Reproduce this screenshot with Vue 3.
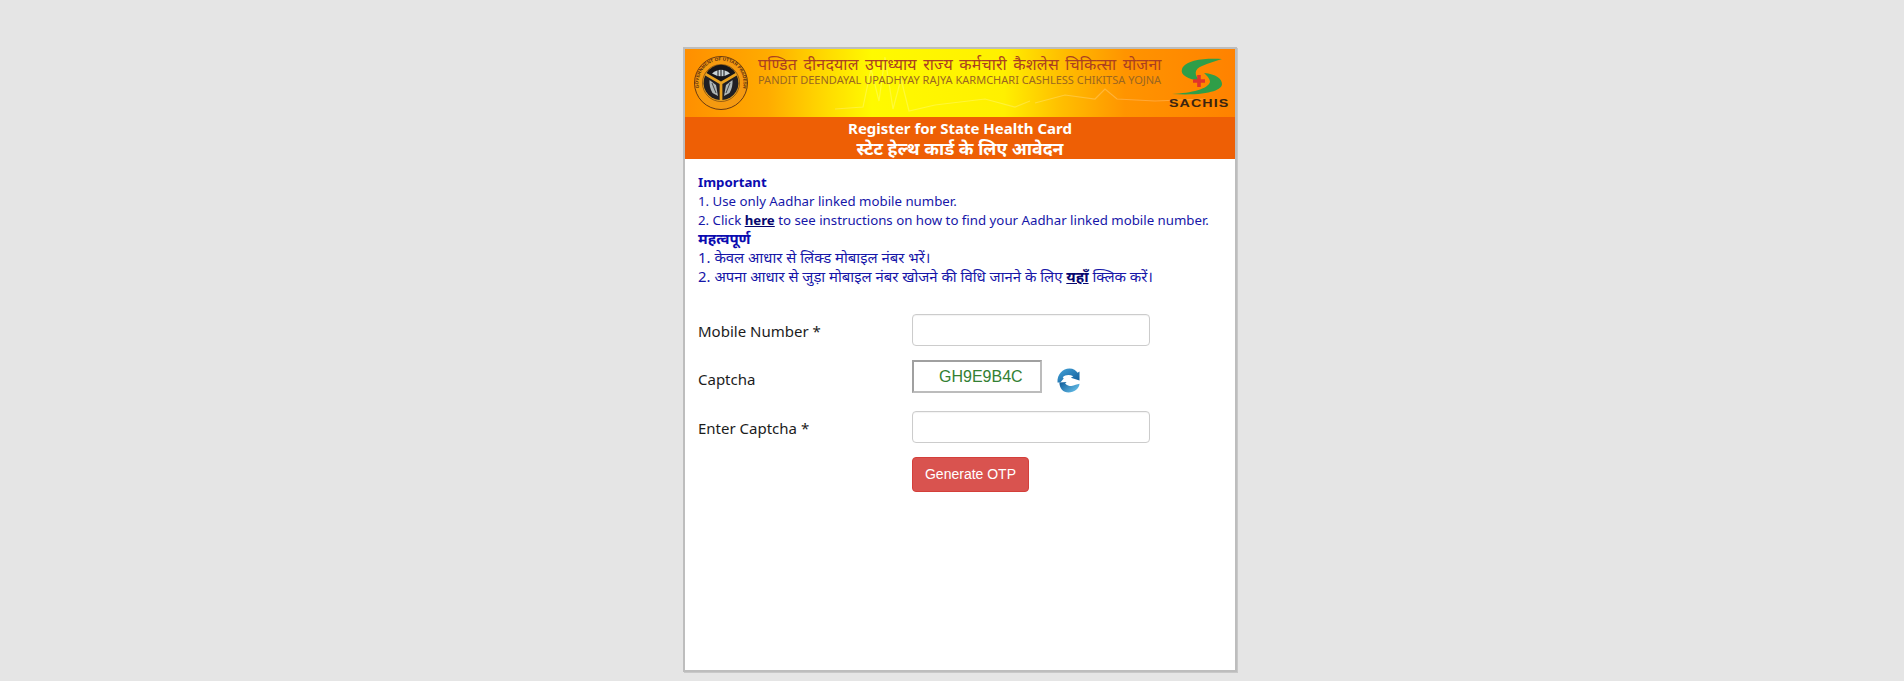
<script setup>
const notes = [
  { kind: 'head', text: 'Important' },
  { kind: 'line', text: '1. Use only Aadhar linked mobile number.' },
  { kind: 'link', before: '2. Click ', link: 'here', after: ' to see instructions on how to find your Aadhar linked mobile number.' },
  { kind: 'head', hi: true, text: 'महत्वपूर्ण' },
  { kind: 'line', hi: true, text: '1. केवल आधार से लिंक्ड मोबाइल नंबर भरें।' },
  { kind: 'link', hi: true, before: '2. अपना आधार से जुड़ा मोबाइल नंबर खोजने की विधि जानने के लिए ', link: 'यहाँ', after: ' क्लिक करें।' }
]
</script>

<template>
  <main class="page">
    <section class="card">
      <header class="banner">
        <svg class="ecg" viewBox="0 0 550 68" preserveAspectRatio="none" aria-hidden="true">
          <path d="M150 60 L178 58 L186 20 L194 52 L200 8 L208 60 L216 30 L224 62 L250 56 L300 50 L330 58 L345 52" />
          <path d="M350 54 L380 46 L410 50 L420 40 L432 50 L470 52 L520 50" />
        </svg>
        <svg class="emblem" viewBox="0 0 56 56" aria-hidden="true">
          <defs>
            <path id="ringText" d="M28 28 m-21.8 6 a22.6 22.6 0 1 1 43.6 0" />
          </defs>
          <circle cx="28" cy="28" r="26.5" fill="#f59a10" stroke="#6b3a10" stroke-width="1" />
          <text class="ring-text"><textPath href="#ringText" startOffset="1">GOVERNMENT OF UTTAR PRADESH</textPath></text>
          <circle cx="28" cy="28" r="18.500" fill="#e9a21f" stroke="#5a3410" stroke-width="0.6" />
          <path d="M28 26.500 L13.500 18 A17 17 0 0 1 42.500 18 Z" fill="#17161a" />
          <path d="M26.600 29 L12.200 20.500 A17 17 0 0 0 26.600 44.900 Z" fill="#201f24" />
          <path d="M29.400 29 L43.800 20.500 A17 17 0 0 1 29.400 44.900 Z" fill="#201f24" />
          <path d="M19 18.500 Q28 11 37 18.500 Q28 24 19 18.500 Z" fill="#c9d3d6" />
          <path d="M28 13.500 V22.500 M25 14.500 V21.500 M31 14.500 V21.500" stroke="#17161a" stroke-width="1" />
          <path d="M16.500 25 L23 30 L25 41 L19.500 38 Q16 32 16.500 25 Z" fill="#aeb6b6" />
          <path d="M39.500 25 L33 30 L31 41 L36.500 38 Q40 32 39.500 25 Z" fill="#aeb6b6" />
          <path d="M19 28 L23 38 M37 28 L33 38" stroke="#2a2a2e" stroke-width="0.8" />
        </svg>
        <div class="banner-title">
          <div class="title-hi">पण्डित दीनदयाल उपाध्याय राज्य कर्मचारी कैशलेस चिकित्सा योजना</div>
          <div class="title-en">PANDIT DEENDAYAL UPADHYAY RAJYA KARMCHARI CASHLESS CHIKITSA YOJNA</div>
        </div>
        <div class="sachis">
          <svg viewBox="0 0 62 42" aria-hidden="true">
            <path d="M54 4 C40 3 18 4 14 14 C12 20 20 24 32 26 C26 20 26 14 34 11 C40 8 48 6 54 4 Z" fill="#2f9e48" />
            <path d="M4 39 C24 38 40 34 42 27 C42 23 38 20 36 18 C48 19 54 24 54 29 C54 35 40 41 4 39 Z" fill="#2f9e48" />
            <path d="M29.200 20 H32.800 V24.200 H37 V27.800 H32.800 V32 H29.200 V27.800 H25 V24.200 H29.200 Z" fill="#e1342b" />
          </svg>
          <span>SACHIS</span>
        </div>
      </header>

      <div class="band">
        <div class="band-en">Register for State Health Card</div>
        <div class="band-hi">स्टेट हेल्थ कार्ड के लिए आवेदन</div>
      </div>

      <div class="notes">
        <div
          v-for="(n, i) in notes"
          :key="i"
          :class="[n.kind === 'head' ? 'note-head' : 'note-line', { 'note-hi': n.hi }]"
        >
          <template v-if="n.kind === 'link'">{{ n.before }}<a href="#" class="note-link">{{ n.link }}</a>{{ n.after }}</template>
          <template v-else>{{ n.text }}</template>
        </div>
      </div>

      <form class="form" @submit.prevent>
        <div class="row">
          <label class="label">Mobile Number *</label>
          <input class="field" type="text" />
        </div>
        <div class="row row-captcha">
          <label class="label">Captcha</label>
          <div class="captcha">GH9E9B4C</div>
          <svg class="refresh" viewBox="0 0 24 26" aria-hidden="true">
            <defs>
              <linearGradient id="arcTop" x1="0" y1="0" x2="1" y2="1">
                <stop offset="0" stop-color="#45a5da" />
                <stop offset="1" stop-color="#0f5a98" />
              </linearGradient>
              <linearGradient id="arcBottom" x1="0" y1="0" x2="1" y2="0.600">
                <stop offset="0" stop-color="#0f5a98" />
                <stop offset="1" stop-color="#62bbe6" />
              </linearGradient>
            </defs>
            <path d="M0.500 15 C0 6.500 6 0.500 13 0.500 C17 0.500 20 2.500 21.500 5 L23.500 3.500 L23.500 13 L14.500 10 L17 8.500 C13 6.500 8.500 7 6 9.500 L7 11 L3.500 15 Z" fill="url(#arcTop)" />
            <path d="M2.500 15 L10 14.500 L8.500 16 C11.500 19 16 19.500 19.500 17.500 L23.500 16.500 C23 22 18 25.500 12 25.500 C6.500 25.500 2.500 21 2.500 15 Z" fill="url(#arcBottom)" />
          </svg>
        </div>
        <div class="row">
          <label class="label">Enter Captcha *</label>
          <input class="field" type="text" />
        </div>
        <div class="row-action">
          <button class="otp" type="submit">Generate OTP</button>
        </div>
      </form>
    </section>
  </main>
</template>

<style>
body { margin: 0; background: #e5e5e5; }
</style>

<style scoped>
.page {
  height: 681px;
  box-sizing: border-box;
  padding: 47px 0 0 16px;
  display: flex;
  justify-content: center;
  background: #e5e5e5;
  font-family: "Noto Sans", "Open Sans", sans-serif;
}
.card {
  width: 554px;
  height: 625px;
  box-sizing: border-box;
  border: 2px solid #bdbdbd;
  box-shadow: 1px 1px 0 #c8c8c8;
  background: #fff;
}
.banner {
  position: relative;
  height: 68px;
  box-sizing: border-box;
  padding: 6px 0 0 8px;
  display: flex;
  align-items: flex-start;
  background: linear-gradient(90deg, #ff8f00 0%, #ffab00 15%, #ffdc00 26%, #fffa00 34%, #fff000 58%, #ffc000 68%, #ff9400 80%, #ff8200 100%);
  overflow: hidden;
}
.ecg {
  position: absolute;
  inset: 0;
  width: 100%;
  height: 100%;
}
.ecg path {
  fill: none;
  stroke: rgba(255, 255, 255, 0.22);
  stroke-width: 1.2;
}
.emblem {
  position: relative;
  width: 56px;
  height: 56px;
  flex: none;
}
.ring-text {
  font-family: "Liberation Sans", sans-serif;
  font-size: 4.6px;
  font-weight: 700;
  fill: #5a2c0a;
}
.banner-title {
  position: relative;
  margin-left: 9px;
  width: 402px;
  flex: none;
}
.title-hi {
  font-size: 16px;
  line-height: 18px;
  color: #ab4020;
  white-space: nowrap;
  letter-spacing: 0.2px;
  word-spacing: 2px;
}
.title-en {
  font-size: 11px;
  line-height: 14px;
  color: #9a6620;
  white-space: nowrap;
}
.sachis {
  position: relative;
  margin-left: 8px;
  width: 62px;
  flex: none;
  display: flex;
  flex-direction: column;
  align-items: center;
}
.sachis svg {
  width: 62px;
  height: 42px;
}
.sachis span {
  font-family: "Liberation Sans", sans-serif;
  font-weight: 700;
  font-size: 11px;
  line-height: 12px;
  color: #3b2410;
  letter-spacing: 0.8px;
  transform: scaleX(1.3);
}
.band {
  height: 42px;
  box-sizing: border-box;
  padding-top: 1px;
  background: #ee5f05;
  color: #fff;
  text-align: center;
  font-weight: 700;
}
.band-en {
  font-size: 15px;
  line-height: 20px;
}
.band-hi {
  font-size: 17.7px;
  line-height: 20px;
}
.notes {
  padding: 14px 13px 0;
  font-size: 13.25px;
  line-height: 18.8px;
  color: #1616a8;
}
.note-hi {
  font-size: 14.9px;
}
.note-head {
  font-weight: 700;
  color: #0b0bb0;
}
.note-link {
  font-weight: 700;
  color: #06066e;
  text-decoration: underline;
}
.form {
  padding: 28px 13px 0;
}
.row {
  display: flex;
  align-items: center;
  height: 33px;
  margin-bottom: 15px;
}
.row-captcha {
  margin-bottom: 16px;
}
.label {
  width: 214px;
  flex: none;
  padding-top: 2px;
  font-size: 15px;
  color: #1c1c1c;
}
.field {
  width: 238px;
  height: 32px;
  box-sizing: border-box;
  border: 1px solid #ccc;
  border-radius: 4px;
  background: #fff;
  box-shadow: inset 0 1px 1px rgba(0, 0, 0, 0.05);
}
.captcha {
  width: 130px;
  height: 33px;
  box-sizing: border-box;
  align-self: flex-start;
  margin-top: -2px;
  border: 2px solid;
  border-color: #a0a0a0 #bcbcbc #bcbcbc #a0a0a0;
  padding-left: 25px;
  font-family: "Liberation Sans", sans-serif;
  font-size: 16px;
  line-height: 30px;
  color: #338033;
}
.refresh {
  width: 23px;
  height: 25px;
  margin-left: 15px;
  margin-top: 4px;
}
.row-action {
  padding-left: 214px;
  margin-top: -2px;
}
.otp {
  width: 117px;
  height: 35px;
  border: 1px solid #d43f3a;
  border-radius: 4px;
  background: #d9534f;
  color: #fff;
  font-family: "Liberation Sans", sans-serif;
  font-size: 14px;
  padding: 0;
}
</style>
